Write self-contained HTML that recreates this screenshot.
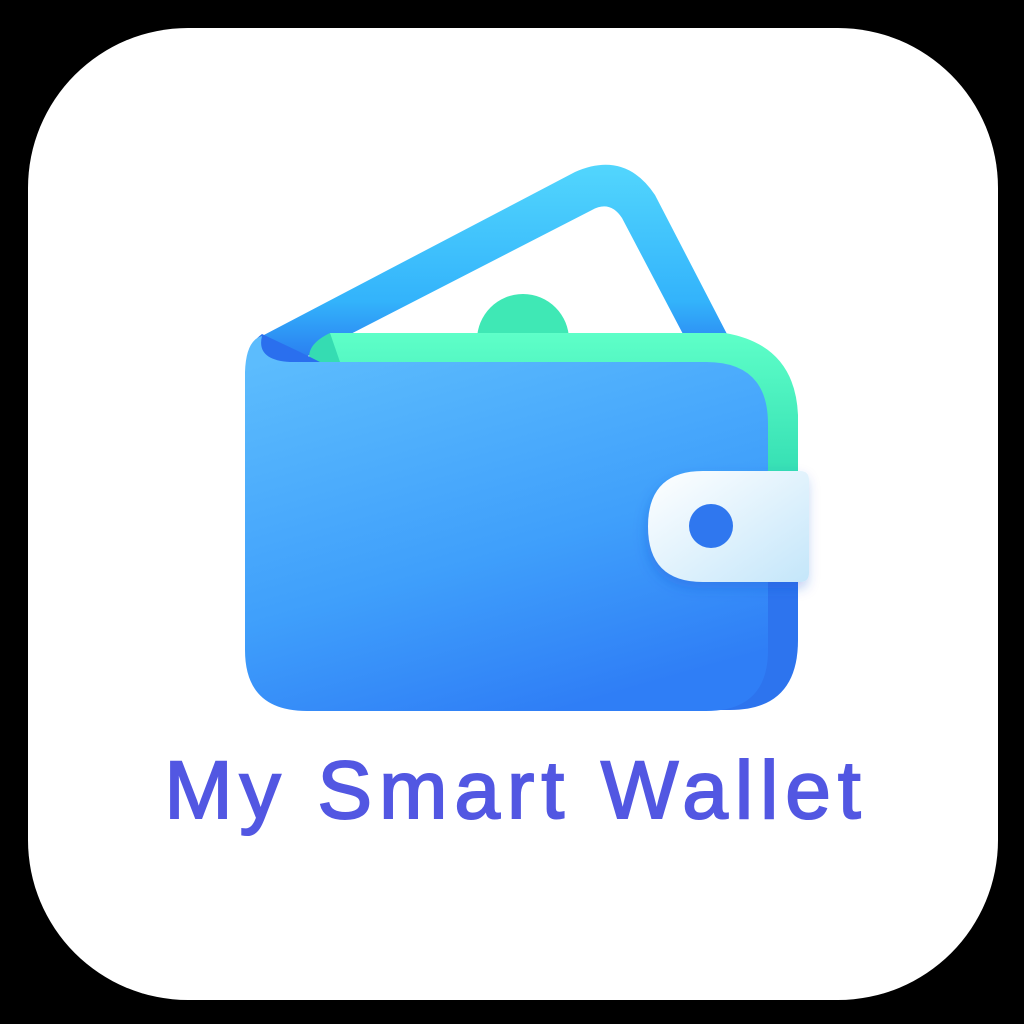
<!DOCTYPE html>
<html><head><meta charset="utf-8"><style>
html,body{margin:0;padding:0;background:#000;width:1024px;height:1024px;overflow:hidden}
</style></head><body>
<svg width="1024" height="1024" viewBox="0 0 1024 1024" xmlns="http://www.w3.org/2000/svg">
<defs>
<linearGradient id="card" x1="0" y1="0" x2="0" y2="1">
<stop offset="0" stop-color="#52d6fd"/><stop offset="0.7" stop-color="#33b3fb"/><stop offset="1" stop-color="#2a7cf0"/></linearGradient>
<linearGradient id="green" x1="0" y1="0" x2="0" y2="1">
<stop offset="0" stop-color="#5effc8"/><stop offset="1" stop-color="#2ed9b0"/></linearGradient>
<linearGradient id="front" x1="0.2" y1="0" x2="0.6" y2="1">
<stop offset="0" stop-color="#5cbcfd"/><stop offset="0.6" stop-color="#3f9ffb"/><stop offset="1" stop-color="#2f7ef6"/></linearGradient>
<linearGradient id="clasp" x1="0" y1="0" x2="1" y2="1">
<stop offset="0" stop-color="#ffffff"/><stop offset="1" stop-color="#c4e6fa"/></linearGradient>
<filter id="sh" x="-20%" y="-20%" width="140%" height="160%"><feDropShadow dx="-2" dy="6" stdDeviation="6" flood-color="#1a4fd0" flood-opacity="0.3"/></filter>
</defs>
<rect x="28" y="28" width="970" height="972" rx="160" fill="#fff"/>
<path d="M262 336 L575 172 Q625 150 655 195 L728 336 L684 336 L622 218 Q610 200 592 210 L300 360 Z" fill="url(#card)"/>
<circle cx="523" cy="340" r="46" fill="#3fe8b5"/>
<path d="M300 380 H740 Q798 380 798 440 V640 Q798 710 730 710 H300 Z" fill="#2d74ee"/>
<path d="M330 333 H725 Q795 345 798 415 V500 H330 Z" fill="url(#green)"/>
<path d="M330 333 Q305 345 310 362 H340 Z" fill="#35dcb2"/>
<path d="M262 334 Q246 346 255 356 Q265 364 300 362 L320 362 L300 352 Z" fill="#2a6fee"/>
<path d="M245 372 Q246 340 262 336 Q256 360 290 362 H706 Q768 362 768 424 V650 Q768 711 706 711 H307 Q245 711 245 650 Z" fill="url(#front)"/>
<path d="M703 471 H800 Q809 471 809 480 V573 Q809 582 800 582 H703 Q648 582 648 526.5 Q648 471 703 471 Z" fill="url(#clasp)" filter="url(#sh)"/>
<circle cx="711" cy="526" r="22" fill="#2f77ef"/>
<text x="516" y="818" text-anchor="middle" font-family="Liberation Sans, sans-serif" font-size="82" stroke="#5257e2" stroke-width="2" letter-spacing="7" fill="#5257e2">My Smart Wallet</text>
</svg>
</body></html>
